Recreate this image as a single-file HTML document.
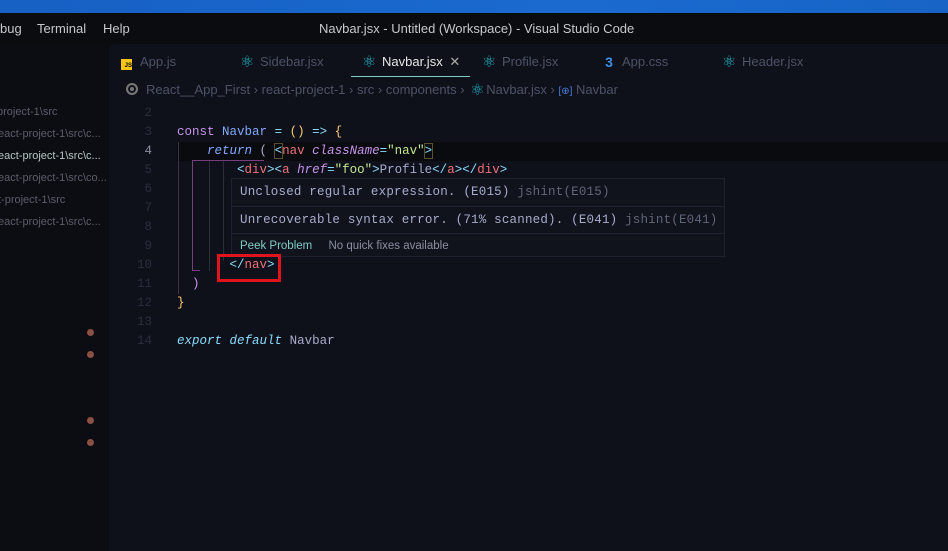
<!DOCTYPE html>
<html><head><meta charset="utf-8"><style>
*{margin:0;padding:0;box-sizing:border-box}
body{width:948px;height:551px;overflow:hidden;background:#0b0c10;font-family:"Liberation Sans",sans-serif;position:relative}
.top{position:absolute;left:0;top:0;width:948px;height:13px;background:linear-gradient(90deg,#1760c4,#1a6ad0 60%,#1864c6)}
.menu{position:absolute;top:21px;font-size:13px;color:#c8c8c8}
.side{position:absolute;left:0;top:44px;width:108px;height:507px;background:#0c0d12}
.si{position:absolute;left:0;font-size:11px;color:#5a5e6a;white-space:nowrap}
.dot{position:absolute;left:87px;width:7px;height:7px;border-radius:50%;background:#8a5043}
.ed{position:absolute;left:109px;top:44px;width:839px;height:507px;background:#0f111a;border-top-left-radius:6px}
.tab{position:absolute;top:54px;font-size:13px;color:#4d5366;white-space:nowrap}
.rx{display:inline-block;width:14px;text-align:center;color:#1fb3c6;margin-right:6px;font-size:16px;line-height:13px;vertical-align:-1px}
.bc{position:absolute;top:82px;font-size:13px;color:#4d5366;white-space:nowrap}
.code{position:absolute;font-family:"Liberation Mono",monospace;font-size:12.5px;white-space:pre;line-height:19px}
.ln{position:absolute;left:120px;width:32px;text-align:right;font-family:"Liberation Mono",monospace;font-size:12.5px;color:#2a2f3e;line-height:19px}
.k{color:#c792ea}.b{color:#82aaff}.y{color:#ffcb6b}.c{color:#89ddff}.r{color:#f07178}.i{font-style:italic}.s{color:#c3e88d}.w{color:#a6accd}
</style></head><body>
<div class="top"></div>
<div class="menu" style="left:0">bug</div>
<div class="menu" style="left:37px">Terminal</div>
<div class="menu" style="left:103px">Help</div>
<div class="menu" style="left:319px">Navbar.jsx - Untitled (Workspace) - Visual Studio Code</div>
<div class="side">
<div class="si" style="top:62px;left:-3px">project-1\src</div>
<div class="si" style="top:84px;left:-2px">eact-project-1\src\c...</div>
<div class="si" style="top:106px;left:-2px;color:#b4c8c4">eact-project-1\src\c...</div>
<div class="si" style="top:128px;left:-2px">eact-project-1\src\co...</div>
<div class="si" style="top:150px;left:-2px">t-project-1\src</div>
<div class="si" style="top:172px;left:-2px">eact-project-1\src\c...</div>
<div class="dot" style="top:285px"></div><div class="dot" style="top:307px"></div>
<div class="dot" style="top:373px"></div><div class="dot" style="top:395px"></div>
</div>
<div class="ed"></div>
<div class="tab" style="left:121px"><span style="display:inline-block;width:11px;height:11px;background:#f5c518;color:#000;font-size:6px;font-weight:bold;line-height:14px;text-align:right;vertical-align:-1px;margin-right:8px">JS</span>App.js</div>
<div class="tab" style="left:240px"><span class="rx">⚛</span>Sidebar.jsx</div>
<div class="tab" style="left:362px;color:#e6e6e6"><span class="rx">⚛</span>Navbar.jsx <span style="color:#aaa;margin-left:3px">✕</span></div>
<div style="position:absolute;left:351px;top:76px;width:119px;height:1px;background:#80cbc4"></div>
<div class="tab" style="left:482px"><span class="rx">⚛</span>Profile.jsx</div>
<div class="tab" style="left:602px"><span class="rx" style="color:#3c8fe6;font-weight:bold;font-size:14px">3</span>App.css</div>
<div class="tab" style="left:722px"><span class="rx">⚛</span>Header.jsx</div>
<div class="bc" style="left:126px"><span style="display:inline-block;width:12px;height:12px;border:2px solid #777;border-radius:50%;vertical-align:-1px;margin-right:8px;box-shadow:inset 0 0 0 2px #0f111a;background:#777"></span>React__App_First › react-project-1 › src › components › <span class="rx" style="margin:0 2px">⚛</span>Navbar.jsx › <span style="color:#4a7fe0;font-size:10px">[⊕]</span> Navbar</div>
<div style="position:absolute;left:177px;top:142px;width:771px;height:19px;background:#0a0b0f"></div>
<div class="ln" style="top:104px">2<br>3<br><span style="color:#8a8fa0">4</span><br>5<br>6<br>7<br>8<br>9<br>10<br>11<br>12<br>13<br>14</div>
<div style="position:absolute;left:178px;top:142px;width:1px;height:152px;background:#3a3448"></div>
<div style="position:absolute;left:192px;top:161px;width:1px;height:110px;background:#7a3e80"></div>
<div style="position:absolute;left:192px;top:270px;width:8px;height:1px;background:#7a3e80"></div>
<div style="position:absolute;left:192px;top:160px;width:72px;height:1px;background:#7a3e80"></div>
<div style="position:absolute;left:209px;top:161px;width:1px;height:110px;background:#2a2d3a"></div>
<div style="position:absolute;left:223px;top:161px;width:1px;height:100px;background:#2a2d3a"></div>
<div class="code" style="left:177px;top:123px"><span class="k">const</span> <span class="b">Navbar</span> <span class="c">=</span> <span class="y">()</span> <span class="c">=&gt;</span> <span class="y">{</span>
    <span class="k i" style="color:#82aaff">return</span> <span class="w">(</span> <span class="c" style="outline:1px solid #5a5030">&lt;</span><span class="r">nav</span> <span class="k i">className</span><span class="c">=</span><span class="s">"nav"</span><span class="c" style="outline:1px solid #5a5030">&gt;</span>
        <span class="c">&lt;</span><span class="r">div</span><span class="c">&gt;&lt;</span><span class="r">a</span> <span class="k i">href</span><span class="c">=</span><span class="s">"foo"</span><span class="c">&gt;</span><span class="w">Profile</span><span class="c">&lt;/</span><span class="r">a</span><span class="c">&gt;&lt;/</span><span class="r">div</span><span class="c">&gt;</span>




       <span class="c">&lt;/</span><span class="r">nav</span><span class="c">&gt;</span>
  <span class="k">)</span>
<span class="y">}</span>

<span class="c i">export</span> <span class="c i">default</span> <span class="w">Navbar</span></div>
<div style="position:absolute;left:231px;top:178px;width:494px;height:79px;background:#11131c;border:1px solid #1e2230"></div>
<div style="position:absolute;left:232px;top:206px;width:492px;height:1px;background:#1e2230"></div>
<div style="position:absolute;left:232px;top:233px;width:492px;height:1px;background:#1e2230"></div>
<div class="code" style="left:240px;top:183px;color:#a6accd;letter-spacing:0.2px">Unclosed regular expression. (E015) <span style="color:#5f6578">jshint(E015)</span></div>
<div class="code" style="left:240px;top:211px;color:#a6accd;letter-spacing:0.2px">Unrecoverable syntax error. (71% scanned). (E041) <span style="color:#5f6578">jshint(E041)</span></div>
<div style="position:absolute;left:240px;top:240px;font-size:11.5px;color:#80cbc4">Peek Problem <span style="color:#8a8fa0;margin-left:13px">No quick fixes available</span></div>
<div style="position:absolute;left:217px;top:254px;width:64px;height:28px;border:3px solid #e0141e"></div>
</body></html>
